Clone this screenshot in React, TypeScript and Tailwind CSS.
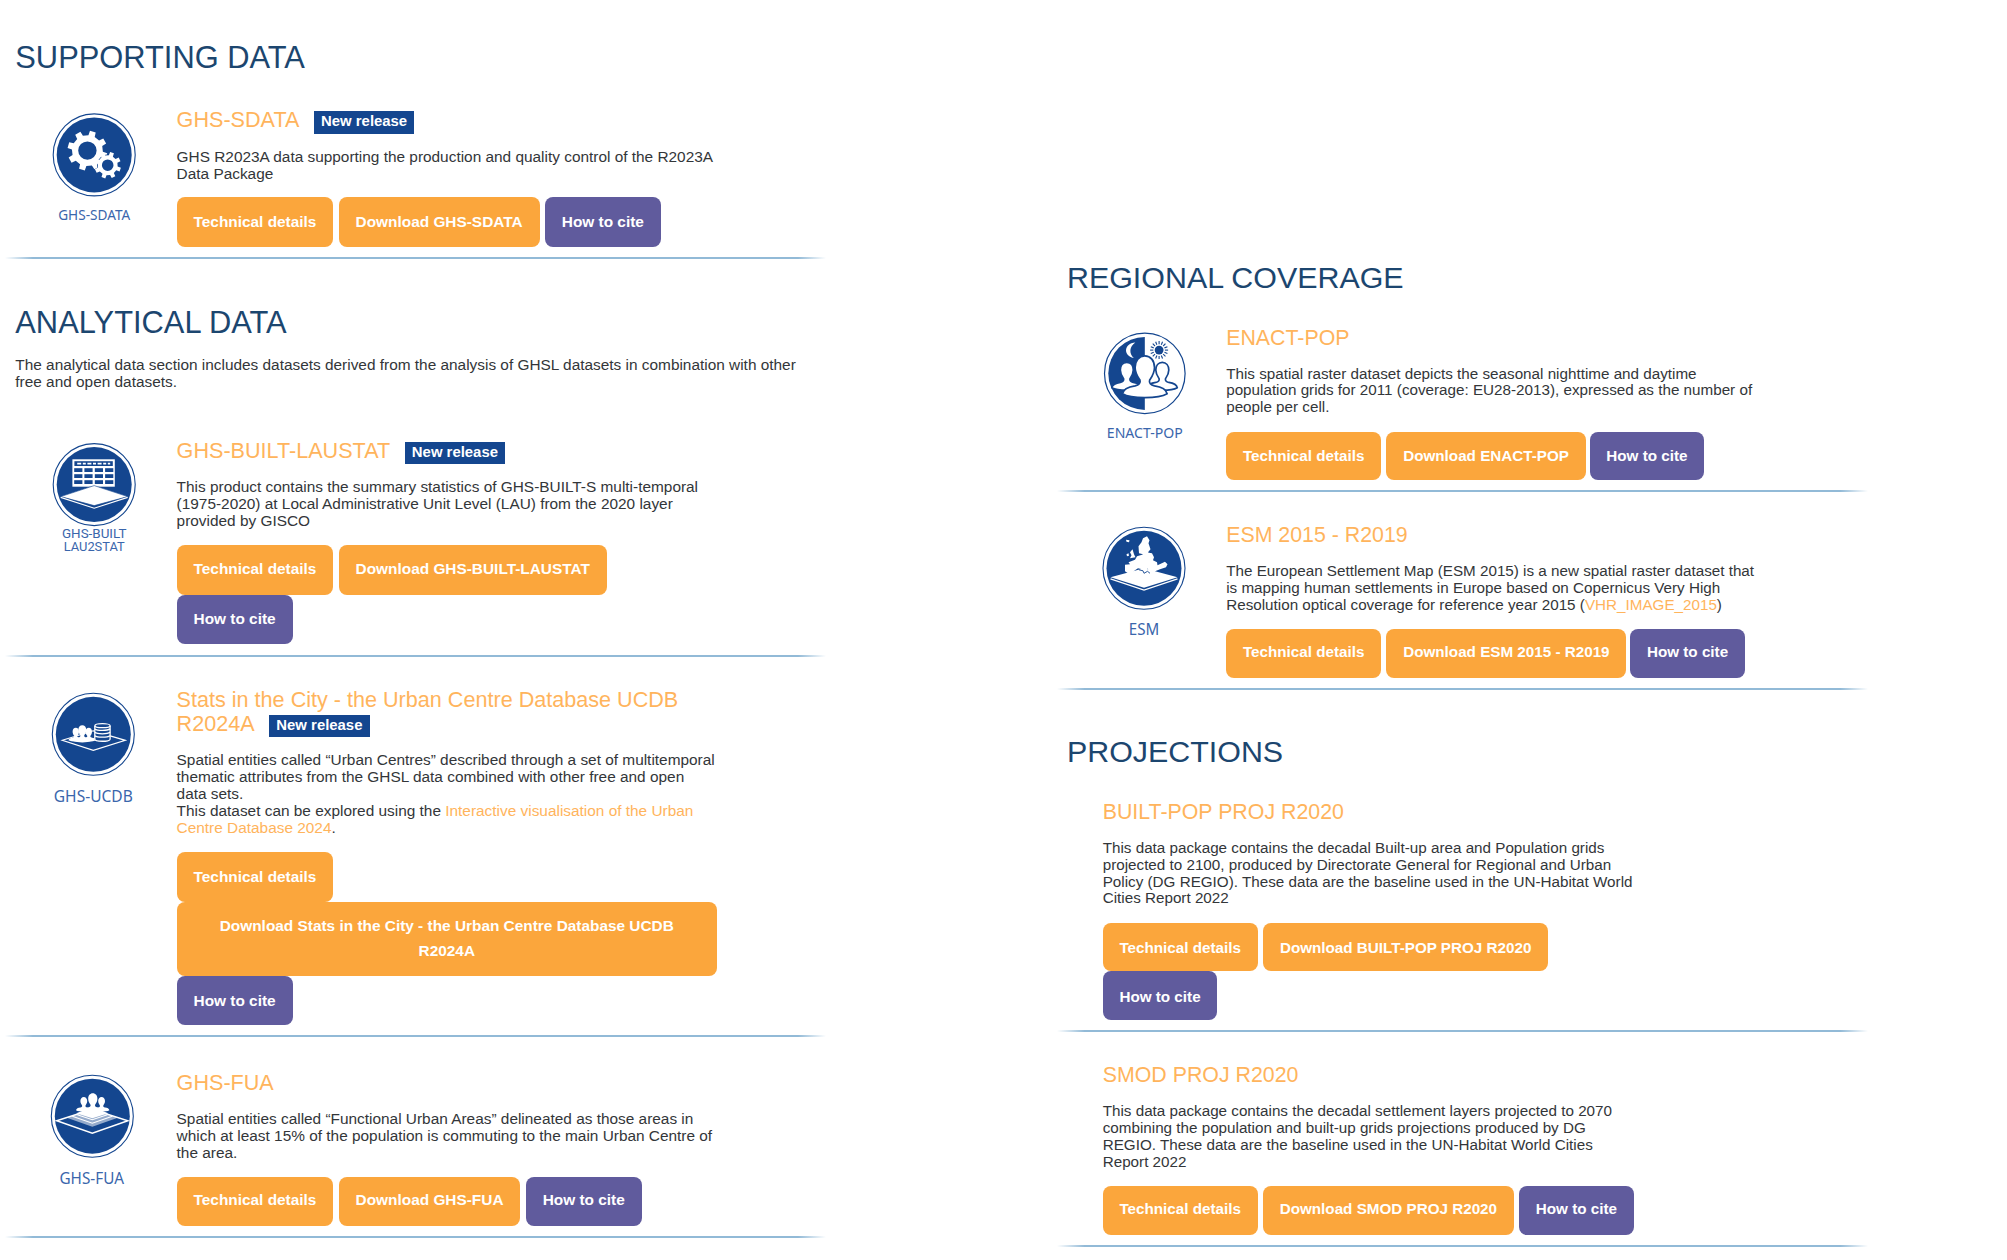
import type { ReactNode } from "react";

const NAVY = "#14468f";

function gearPath(cx: number, cy: number, outer: number, inner: number, hole: number, teeth: number, turn: number) {
  const pts: string[] = [];
  const step = (Math.PI * 2) / teeth;
  const at = (a: number, r: number) => `${(cx + Math.sin(a) * r).toFixed(2)},${(cy - Math.cos(a) * r).toFixed(2)}`;
  for (let i = 0; i < teeth; i++) {
    const a = (turn * Math.PI) / 180 + i * step;
    pts.push(at(a - step * 0.27, inner), at(a - step * 0.19, outer), at(a + step * 0.19, outer), at(a + step * 0.27, inner));
  }
  return `M${pts.join("L")}Z M${cx - hole},${cy}a${hole},${hole} 0 1 0 ${hole * 2},0a${hole},${hole} 0 1 0 ${-hole * 2},0Z`;
}

function Person({ x, y, s, outline }: { x: number; y: number; s: number; outline?: boolean }) {
  return (
    <path
      transform={`translate(${x} ${y}) scale(${s})`}
      d="M0 -14C6 -14 10 -9 10 -2C10 4 7 8 5 11C4 14 6 16 10 17C17 18 22 20 23 25C18 28 9 29 0 29C-9 29 -18 28 -23 25C-22 20 -17 18 -10 17C-6 16 -4 14 -5 11C-7 8 -10 4 -10 -2C-10 -9 -6 -14 0 -14Z"
      fill="white"
      stroke={outline ? NAVY : "none"}
      strokeWidth={outline ? 1.7 / s : 0}
    />
  );
}

function Disc() {
  return (
    <>
      <circle r="41" fill="white" stroke={NAVY} strokeWidth="1.1" />
      <circle r="37.5" fill={NAVY} />
    </>
  );
}

function Label({ y, w, size, x = 0, compact, children }: { y: number; w: number; size: number; x?: number; compact?: boolean; children: string }) {
  return (
    <text
      x={x - w / 2}
      y={y}
      textLength={w}
      lengthAdjust="spacingAndGlyphs"
      fontSize={size}
      fontFamily={compact ? "Roboto, sans-serif" : '"Noto Sans", "Open Sans", sans-serif'}
      fill="#3a66ac"
    >
      {children}
    </text>
  );
}

function Badge({ cx, cy, children }: { cx: number; cy: number; children: ReactNode }) {
  return (
    <svg width="150" height="120" viewBox="0 0 150 120" className="overflow-visible">
      <g transform={`translate(${cx} ${cy})`}>{children}</g>
    </svg>
  );
}

const sdataIcon = (
  <Badge cx={94.2} cy={47.9}>
    <Disc />
    <path fillRule="evenodd" fill="white" d={gearPath(-6.8, -4.3, 20, 15.5, 9.2, 8, 16)} />
    <circle cx="13.5" cy="10.3" r="10.6" fill={NAVY} />
    <path fillRule="evenodd" fill="white" d={gearPath(13.5, 10.3, 13.4, 10, 5.8, 8, 19)} />
    <Label y={65.4} w={72} size={14.5}>GHS-SDATA</Label>
  </Badge>
);

const laustatIcon = (
  <Badge cx={94.2} cy={46.6}>
    <Disc />
    <rect x="-21.8" y="-25.3" width="42.4" height="27.4" fill="white" />
    <rect x="-19.8" y="-23.4" width="38.4" height="4.8" fill={NAVY} />
    <path d="M-17 -21H16" stroke="white" strokeWidth="1.8" strokeDasharray="4 1.6 3 1.6" />
    {[-16.4, -10.4, -4.4].map((y) =>
      [-20, -9.8, 0.6, 10.9].map((x) => <rect key={`${x}/${y}`} x={x} y={y} width="8.2" height="3.8" fill={NAVY} />),
    )}
    <path d="M-33.5 12L0 1L33.5 12L0 21Z" fill="white" stroke={NAVY} strokeWidth="0.6" />
    <path d="M-33.5 12.8L0 23.6L33.5 12.8" fill="none" stroke="white" strokeWidth="1.2" />
    <Label y={53} w={64.5} size={12.6} compact>GHS-BUILT</Label>
    <Label y={66} w={61} size={12.6} compact>LAU2STAT</Label>
  </Badge>
);

const ucdbIcon = (
  <Badge cx={93.3} cy={47.3}>
    <Disc />
    <path d="M-31 6L0 -3.5L32 6L0 16Z" fill="none" stroke="white" strokeWidth="1.2" />
    <Person x={-17.5} y={-2} s={0.32} />
    <Person x={-4.5} y={-2} s={0.32} />
    <Person x={-11} y={-3.5} s={0.4} />
    <path d="M1.5 -8.5V5C1.5 7.6 16.8 7.6 16.8 5V-8.5Z" fill={NAVY} />
    <g fill={NAVY} stroke="white" strokeWidth="1.3">
      <path d="M1.5 -8.5V5C1.5 7.6 16.8 7.6 16.8 5V-8.5" />
      <path d="M1.5 -5.4C4 -3.4 14 -3.4 16.8 -5.4M1.5 -2C4 0 14 0 16.8 -2M1.5 1.4C4 3.4 14 3.4 16.8 1.4" fill="none" />
      <ellipse cx="9.2" cy="-8.6" rx="7.6" ry="2" />
    </g>
    <Label y={67.8} w={79} size={17}>GHS-UCDB</Label>
  </Badge>
);

const fuaIcon = (
  <Badge cx={92.3} cy={46.2}>
    <Disc />
    <path d="M-35.5 4.5L0 -7L35.5 4.5L0 17Z" fill="none" stroke="white" strokeWidth="1.5" />
    <path d="M-25.5 1.5L0 -7.5L25.5 1.5L0 10.5Z" fill="white" fillOpacity="0.55" />
    <path d="M-20 0L0 7L20 0M-15 -1.5L0 3.5L15 -1.5" fill="none" stroke="white" strokeWidth="1.2" />
    <path d="M-16 -3L0 -9L16 -3L0 2Z" fill="white" />
    <Person x={-8.5} y={-14.5} s={0.34} />
    <Person x={9.3} y={-14.5} s={0.34} />
    <Person x={0.5} y={-16.5} s={0.46} />
    <Label x={-0.6} y={67.9} w={64.5} size={16}>GHS-FUA</Label>
  </Badge>
);

const enactIcon = (
  <Badge cx={87.8} cy={47.4}>
    <circle r="40.3" fill="white" stroke={NAVY} strokeWidth="1.2" />
    <path d="M0 -36.5A36.5 36.5 0 0 0 0 36.5Z" fill={NAVY} />
    <path d="M-9.5 -31C-21 -30 -22 -18 -11 -15.5C-16 -20 -15.5 -27 -9.5 -31Z" fill="white" />
    <circle cx="14.3" cy="-23.3" r="4.4" fill={NAVY} />
    {Array.from({ length: 16 }, (_, i) => (
      <path key={i} d="M0 -5.8V-9" transform={`translate(14.3 -23.3) rotate(${i * 22.5})`} stroke={NAVY} strokeWidth="1.1" />
    ))}
    <Person x={-18} y={-2} s={0.65} outline />
    <Person x={17.5} y={-2} s={0.65} outline />
    <Person x={0} y={-4} s={0.97} outline />
    <Label y={64.9} w={76} size={15}>ENACT-POP</Label>
  </Badge>
);

const esmIcon = (
  <Badge cx={87} cy={45.3}>
    <Disc />
    <path d="M-33.5 9L0 0L33.5 9L0 19.5Z" fill="white" />
    <path d="M-33.5 10.5L0 21.7L33.5 10.5" fill="none" stroke="white" strokeWidth="1.3" />
    <path d="M-5 -15L-5.5 -22L-2.5 -26L-1 -30L3 -32L5.5 -28L4.5 -25L6.5 -19L4 -16L6 -13L3 -12L-1 -14Z" fill="white" />
    <path d="M-19 3L-19 -3.5L-14 -4L-15.5 -6L-9 -8.5L-7 -12L-2 -13.5L2 -16L8 -15L10 -11L9 -8L13 -6L13.5 -3L21 -6.5L23.5 -4L22 -1L16 1L11 3L9 6L5 2.5L3 0L3.5 5L0 4L-2 1L-6 0L-9 2L-12 4.5L-16 5Z" fill="white" />
    <path d="M-14 -10L-12.5 -13L-14 -16L-11.5 -19L-10 -14L-8.5 -11ZM-17.5 -14L-15.5 -15L-15 -12.5L-17 -12ZM-18 -28.5L-14.5 -28L-15 -26L-17.5 -26.5Z" fill="white" />
    <path d="M-5 1.5L-1 2.5L0 5L3.5 3L6 5" fill="none" stroke={NAVY} strokeWidth="0.9" />
    <Label y={66.9} w={30.5} size={17}>ESM</Label>
  </Badge>
);

function Divider() {
  return (
    <div className="h-[2px] w-full bg-[linear-gradient(90deg,transparent_0%,#92bad7_3.4%,#92bad7_96.6%,transparent_100%)]" />
  );
}

function NewRelease() {
  return (
    <span className="-my-1 ml-[14.5px] inline-block h-[22.6px] bg-[#14468f] px-[7.2px] align-[1.3px] text-[14.9px] leading-[21.5px] font-bold text-white">
      New release
    </span>
  );
}

function Btn({ children, cite, className = "" }: { children: ReactNode; cite?: boolean; className?: string }) {
  return (
    <button
      className={`rounded-lg px-[1.1em] font-bold leading-[24.2px] text-white ${cite ? "bg-[#605b9d]" : "bg-[#fba63c]"} ${className}`}
    >
      {children}
    </button>
  );
}

type CardProps = {
  icon?: ReactNode;
  title: ReactNode;
  lines: ReactNode[];
  children: ReactNode;
  className: string;
  iconCol: string;
};

function Card({ icon, title, lines, children, className, iconCol }: CardProps) {
  return (
    <article className={`flex flex-col justify-between ${className}`}>
      <div className="flex">
        <div className={`shrink-0 ${iconCol}`}>{icon}</div>
        <div className="whitespace-nowrap">
          <h3 className="pt-px text-[1.403em] leading-[1.12] text-[#ffb45c]">{title}</h3>
          <p className="mt-[15px] leading-[1.109]">
            {lines.map((l, i) => (
              <span key={i} className="block">{l}</span>
            ))}
          </p>
          <div className="mt-[15.5px]">{children}</div>
        </div>
      </div>
      <Divider />
    </article>
  );
}

function Link({ children }: { children: ReactNode }) {
  return <a className="text-[#ffb45c]">{children}</a>;
}

const LEFT_H = "h-[49.6px]";
const RIGHT_H = "h-[48.7px]";

export default function App() {
  return (
    <main className="flex h-[1260px] w-[2007px] items-start overflow-hidden bg-white font-['Liberation_Sans',Arial,sans-serif] text-[#333639]">
      <section className="flex w-[826px] flex-col pt-[39.1px] text-[15.4px]">
        <h2 className="ml-[15.3px] text-[30.85px] leading-[37px] text-[#1c466f]">SUPPORTING DATA</h2>
        <div className="ml-[5px] flex flex-col">
          <Card
            className="mt-[31.3px] h-[151.6px]"
            iconCol="-ml-[5px] w-[176.6px]"
            icon={sdataIcon}
            title={<>GHS-SDATA<NewRelease /></>}
            lines={["GHS R2023A data supporting the production and quality control of the R2023A", "Data Package"]}
          >
            <div className="flex gap-[5.3px]">
              <Btn className={`${LEFT_H} pt-px`}>Technical details</Btn>
              <Btn className={`${LEFT_H} pt-px`}>Download GHS-SDATA</Btn>
              <Btn cite className={`${LEFT_H} pt-px`}>How to cite</Btn>
            </div>
          </Card>
        </div>

        <h2 className="mt-[44.8px] ml-[15.3px] text-[30.85px] leading-[37px] text-[#1c466f]">ANALYTICAL DATA</h2>
        <p className="mt-[15.5px] ml-[15.3px] leading-[17.1px] whitespace-nowrap">
          The analytical data section includes datasets derived from the analysis of GHSL datasets in combination with other
          <br />
          free and open datasets.
        </p>
        <div className="ml-[5px] flex flex-col">
          <Card
            className="mt-[47.6px] h-[218.6px]"
            iconCol="-ml-[5px] w-[176.6px]"
            icon={laustatIcon}
            title={<>GHS-BUILT-LAUSTAT<NewRelease /></>}
            lines={[
              "This product contains the summary statistics of GHS-BUILT-S multi-temporal",
              "(1975-2020) at Local Administrative Unit Level (LAU) from the 2020 layer",
              "provided by GISCO",
            ]}
          >
            <div className="flex gap-[5.3px]">
              <Btn className={`${LEFT_H} pb-[2px]`}>Technical details</Btn>
              <Btn className={`${LEFT_H} pb-[2px]`}>Download GHS-BUILT-LAUSTAT</Btn>
            </div>
            <div className="flex">
              <Btn cite className={`${LEFT_H} pb-px`}>How to cite</Btn>
            </div>
          </Card>

          <Card
            className="mt-[30px] h-[350.3px]"
            iconCol="-ml-[5px] w-[176.6px]"
            icon={ucdbIcon}
            title={<>Stats in the City - the Urban Centre Database UCDB<br />R2024A<NewRelease /></>}
            lines={[
              "Spatial entities called “Urban Centres” described through a set of multitemporal",
              "thematic attributes from the GHSL data combined with other free and open",
              "data sets.",
              <>This dataset can be explored using the <Link>Interactive visualisation of the Urban</Link></>,
              <><Link>Centre Database 2024</Link>.</>,
            ]}
          >
            <div className="flex w-[540.4px] flex-col items-start">
              <Btn className={`${LEFT_H} pt-px`}>Technical details</Btn>
              <Btn className="h-[74px] w-full">
                Download Stats in the City - the Urban Centre Database UCDB<br />R2024A
              </Btn>
              <Btn cite className={`${LEFT_H} pt-px`}>How to cite</Btn>
            </div>
          </Card>

          <Card
            className="mt-[32.7px] h-[168.8px]"
            iconCol="-ml-[5px] w-[176.6px]"
            icon={fuaIcon}
            title="GHS-FUA"
            lines={[
              "Spatial entities called “Functional Urban Areas” delineated as those areas in",
              "which at least 15% of the population is commuting to the main Urban Centre of",
              "the area.",
            ]}
          >
            <div className="flex gap-[5.3px]">
              <Btn className={`${LEFT_H} pb-[2px]`}>Technical details</Btn>
              <Btn className={`${LEFT_H} pb-[2px]`}>Download GHS-FUA</Btn>
              <Btn cite className={`${LEFT_H} pb-[2px]`}>How to cite</Btn>
            </div>
          </Card>
        </div>
      </section>

      <section className="ml-[231px] flex w-[811px] flex-col pt-[259.2px] text-[15.22px]">
        <h2 className="ml-[10px] text-[30.4px] leading-[36.5px] text-[#1c466f]">REGIONAL COVERAGE</h2>
        <Card
          className="mt-[29.9px] h-[166.7px]"
          iconCol="w-[169.2px]"
          icon={enactIcon}
          title="ENACT-POP"
          lines={[
            "This spatial raster dataset depicts the seasonal nighttime and daytime",
            "population grids for 2011 (coverage: EU28-2013), expressed as the number of",
            "people per cell.",
          ]}
        >
          <div className="flex gap-[5.3px]">
            <Btn className={`${RIGHT_H} pt-px`}>Technical details</Btn>
            <Btn className={`${RIGHT_H} pt-px`}>Download ENACT-POP</Btn>
            <Btn cite className={`${RIGHT_H} -ml-[1.4px] pt-px`}>How to cite</Btn>
          </div>
        </Card>
        <Card
          className="mt-[31px] h-[166.4px]"
          iconCol="w-[169.2px]"
          icon={esmIcon}
          title="ESM 2015 - R2019"
          lines={[
            "The European Settlement Map (ESM 2015) is a new spatial raster dataset that",
            "is mapping human settlements in Europe based on Copernicus Very High",
            <>Resolution optical coverage for reference year 2015 (<Link>VHR_IMAGE_2015</Link>)</>,
          ]}
        >
          <div className="flex gap-[5.3px]">
            <Btn className={`${RIGHT_H} pb-[3px]`}>Technical details</Btn>
            <Btn className={`${RIGHT_H} pb-[3px]`}>Download ESM 2015 - R2019</Btn>
            <Btn cite className={`${RIGHT_H} -ml-[1.4px] pb-[3px]`}>How to cite</Btn>
          </div>
        </Card>

        <h2 className="mt-[43.5px] ml-[10px] text-[30.4px] leading-[36.5px] text-[#1c466f]">PROJECTIONS</h2>
        <Card
          className="mt-[30.2px] h-[232.4px]"
          iconCol="w-[45.7px]"
          title="BUILT-POP PROJ R2020"
          lines={[
            "This data package contains the decadal Built-up area and Population grids",
            "projected to 2100, produced by Directorate General for Regional and Urban",
            "Policy (DG REGIO). These data are the baseline used in the UN-Habitat World",
            "Cities Report 2022",
          ]}
        >
          <div className="flex gap-[5.5px]">
            <Btn className={`${RIGHT_H} pt-px`}>Technical details</Btn>
            <Btn className={`${RIGHT_H} pt-px`}>Download BUILT-POP PROJ R2020</Btn>
          </div>
          <div className="flex">
            <Btn cite className={`${RIGHT_H} pt-[2px]`}>How to cite</Btn>
          </div>
        </Card>
        <Card
          className="mt-[31.2px] h-[183.2px]"
          iconCol="w-[45.7px]"
          title="SMOD PROJ R2020"
          lines={[
            "This data package contains the decadal settlement layers projected to 2070",
            "combining the population and built-up grids projections produced by DG",
            "REGIO. These data are the baseline used in the UN-Habitat World Cities",
            "Report 2022",
          ]}
        >
          <div className="flex gap-[5.3px]">
            <Btn className={`${RIGHT_H} pb-[3px]`}>Technical details</Btn>
            <Btn className={`${RIGHT_H} pb-[3px]`}>Download SMOD PROJ R2020</Btn>
            <Btn cite className={`${RIGHT_H} pb-[3px]`}>How to cite</Btn>
          </div>
        </Card>
      </section>
    </main>
  );
}
